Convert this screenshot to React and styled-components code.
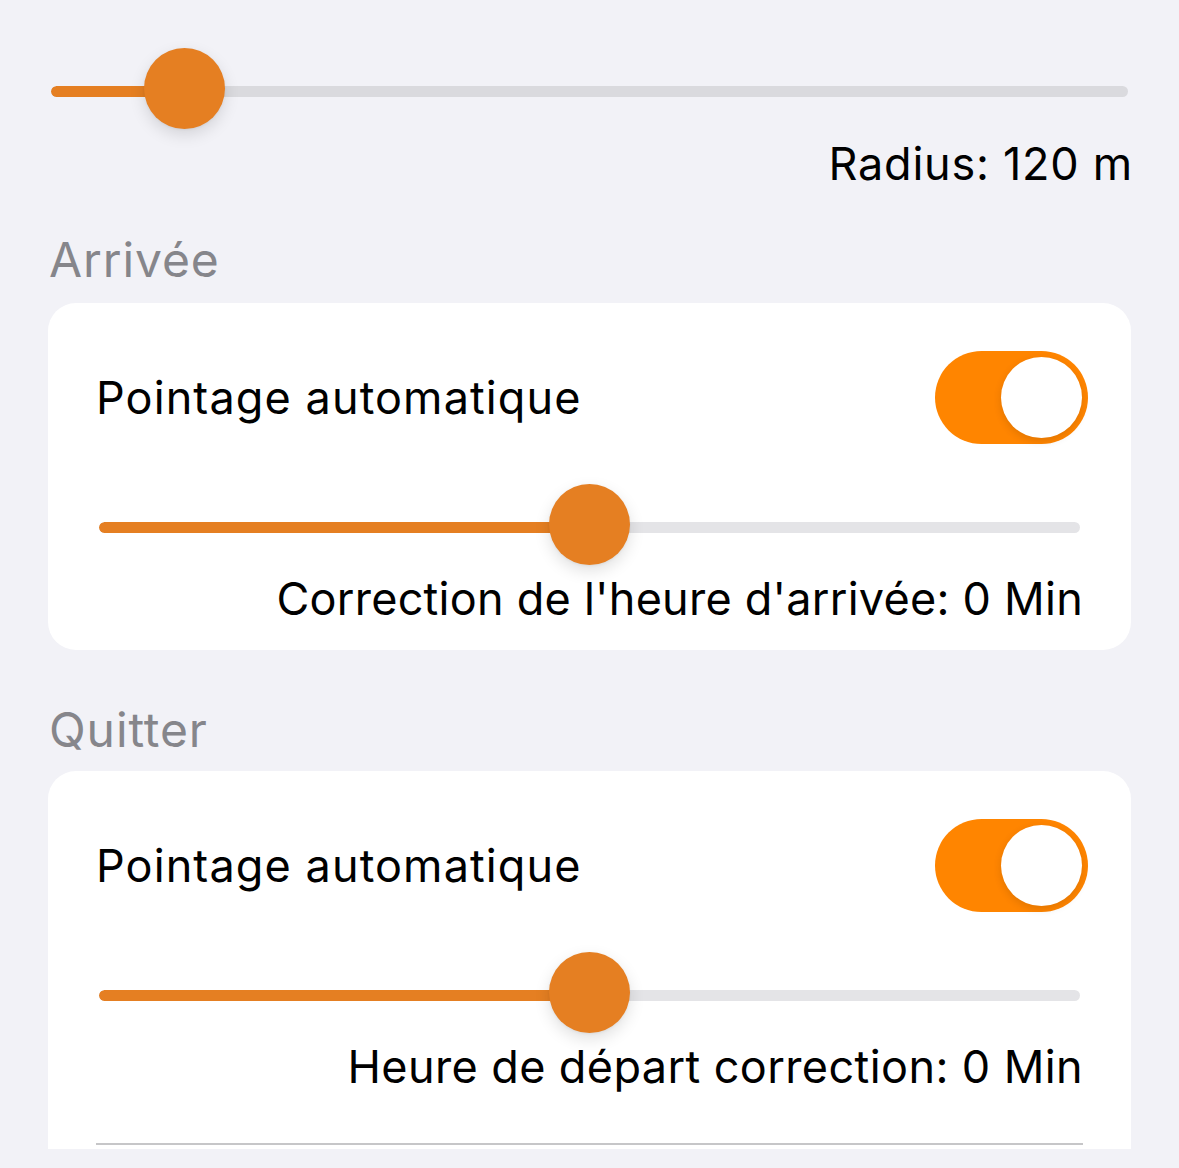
import React from "react";
import styled, { createGlobalStyle } from "styled-components";

const GlobalStyle = createGlobalStyle`
  html, body {
    margin: 0;
    padding: 0;
    background: #f2f2f7;
  }
  body {
    font-family: Inter, "Noto Sans", "Liberation Sans", sans-serif;
    color: #000;
  }
`;

const Screen = styled.div`
  width: 1179px;
  height: 1168px;
  background: #f2f2f7;
`;

const ScrollArea = styled.div`
  height: 1149px;
  overflow: hidden;
  padding: 48px 48px 0 48px;
  box-sizing: border-box;
  display: flex;
  flex-direction: column;

  & > * {
    flex-shrink: 0;
  }
`;

const SliderWrap = styled.div`
  position: relative;
  height: 81px;
  flex-shrink: 0;
  display: flex;
  align-items: center;
  margin: ${(p) => p.$margin || "0"};
`;

const Track = styled.div`
  flex: 1;
  height: 11px;
  margin-top: 6px;
  border-radius: 6px;
  background: ${(p) => (p.$onCard ? "#e4e4e7" : "#dadade")};
  overflow: hidden;
`;

const TrackFill = styled.div`
  height: 100%;
  background: #e57f22;
  border-radius: 6px 0 0 6px;
`;

const Thumb = styled.div`
  position: absolute;
  top: 0;
  width: 81px;
  height: 81px;
  border-radius: 50%;
  background: #e57f22;
  box-shadow: 0 6px 16px rgba(0, 0, 0, 0.12), 0 1px 3px rgba(0, 0, 0, 0.06);
`;

const ValueLabel = styled.div`
  font-size: 45px;
  line-height: 52px;
  text-align: right;
  flex-shrink: 0;
  margin: ${(p) => p.$margin || "0"};
  letter-spacing: ${(p) => p.$ls || "0.3px"};
`;

const SectionHeader = styled.div`
  font-size: 48px;
  line-height: 56px;
  color: #86868b;
  padding-left: 1px;
  letter-spacing: 0.9px;
  margin: ${(p) => p.$margin || "0"};
`;

const Card = styled.div`
  background: #fff;
  border-radius: 28px;
  padding: 48px 43px 25px 50px;
  display: flex;
  flex-direction: column;
  flex-shrink: 0;
`;

const ToggleRow = styled.div`
  display: flex;
  align-items: center;
  justify-content: space-between;
  height: 93px;
  flex-shrink: 0;
`;

const RowTitle = styled.div`
  font-size: 45px;
  line-height: 52px;
  letter-spacing: 1.1px;
  margin-left: -2px;
`;

const SwitchTrack = styled.div`
  width: 153px;
  height: 93px;
  border-radius: 47px;
  background: #ff8500;
  display: flex;
  align-items: center;
  justify-content: ${(p) => (p.$on ? "flex-end" : "flex-start")};
  padding: 0 6px;
  box-sizing: border-box;
`;

const SwitchKnob = styled.div`
  width: 81px;
  height: 81px;
  border-radius: 50%;
  background: #fff;
  box-shadow: 0 3px 8px rgba(0, 0, 0, 0.12);
`;

const Separator = styled.div`
  height: 2px;
  background: #c6c6c8;
  flex-shrink: 0;
  margin: 0 5px 40px -2px;
`;

const Slider = ({ value, onCard, margin }) => (
  <SliderWrap $margin={margin}>
    <Track $onCard={onCard}>
      <TrackFill style={{ width: `calc(${value} * (100% - 81px) + 40px)` }} />
    </Track>
    <Thumb style={{ left: `calc(${value} * (100% - 81px))` }} />
  </SliderWrap>
);

const Switch = ({ on }) => (
  <SwitchTrack $on={on}>
    <SwitchKnob />
  </SwitchTrack>
);

const App = () => {
  return (
    <Screen>
      <GlobalStyle />
      <ScrollArea>
        <Slider value={0.0934} margin="0 3px 0 3px" />
        <ValueLabel $margin="9px -2px 0 0" $ls="0.75px">
          Radius: 120 m
        </ValueLabel>

        <SectionHeader $margin="42px 0 15px 0">Arrivée</SectionHeader>
        <Card>
          <ToggleRow>
            <RowTitle>Pointage automatique</RowTitle>
            <Switch on />
          </ToggleRow>
          <Slider value={0.5} onCard margin="40px 8px 0 1px" />
          <ValueLabel $margin="8px 5px 0 0" $ls="0.25px">
            Correction de l'heure d'arrivée: 0 Min
          </ValueLabel>
        </Card>

        <SectionHeader $margin="52px 0 13px 0">Quitter</SectionHeader>
        <Card>
          <ToggleRow>
            <RowTitle>Pointage automatique</RowTitle>
            <Switch on />
          </ToggleRow>
          <Slider value={0.5} onCard margin="40px 8px 0 1px" />
          <ValueLabel $margin="8px 5px 50px 0" $ls="0.4px">
            Heure de départ correction: 0 Min
          </ValueLabel>
          <Separator />
        </Card>
      </ScrollArea>
    </Screen>
  );
};

export default App;
